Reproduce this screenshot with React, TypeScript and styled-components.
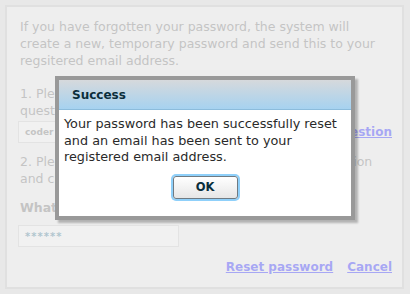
import React from 'react';
import styled, { createGlobalStyle } from 'styled-components';

const GlobalStyle = createGlobalStyle`
  html, body {
    margin: 0;
    padding: 0;
    background: #c5c5c5;
  }
  body {
    font-family: "DejaVu Sans", Verdana, sans-serif;
  }
`;

const Page = styled.div`
  position: relative;
  width: 410px;
  height: 294px;
  padding: 5px 6px 5px 5px;
  box-sizing: border-box;
  overflow: hidden;
`;

const Panel = styled.div`
  height: 100%;
  box-sizing: border-box;
  border: 2px solid #b2b2b2;
  background: #d4d4d4;
  padding: 11px 10px 0 13px;
  display: flex;
  flex-direction: column;
  color: #6b6b6b;
  font-size: 12.5px;
  line-height: 17px;
`;

const Para = styled.p<{ $bold?: boolean; $gap?: number }>`
  margin: 0 0 ${p => p.$gap ?? 16}px;
  font-weight: ${p => (p.$bold ? 'bold' : 'normal')};
  white-space: nowrap;
`;

const Row = styled.div<{ $top: number }>`
  display: flex;
  align-items: center;
  justify-content: space-between;
  margin: ${p => p.$top}px 0 10px -2px;
`;

const Field = styled.div<{ $width: number }>`
  width: ${p => p.$width}px;
  height: 22px;
  box-sizing: border-box;
  border: 1px solid #b8b8b8;
  background: #dcdcdc;
  padding: 0 6px;
  display: flex;
  align-items: center;
  font-size: 9px;
  font-weight: bold;
  color: #6b6b6b;
`;

const Dots = styled.span`
  color: #3b6f86;
  letter-spacing: 1px;
  font-size: 10px;
`;

const Link = styled.a`
  color: #2525e3;
  font-weight: bold;
  text-decoration: underline;
  cursor: pointer;
  font-size: 12px;
`;

const Actions = styled.div`
  margin-top: auto;
  margin-bottom: 11px;
  display: flex;
  justify-content: flex-end;
  gap: 14px;
`;

const Fade = styled.div`
  position: absolute;
  inset: 0;
  background: rgba(255, 255, 255, 0.6);
`;

const Dialog = styled.div`
  position: absolute;
  left: 55px;
  top: 76px;
  width: 300px;
  box-sizing: border-box;
  border: 4px solid #999999;
  background: #ffffff;
  box-shadow: 3px 3px 2px rgba(0, 0, 0, 0.25);
`;

const TitleBar = styled.div`
  height: 30px;
  box-sizing: border-box;
  border-bottom: 1px solid #8cbcdc;
  background: linear-gradient(#d6d9dc, #a6d2f0);
  padding: 0 13px;
  display: flex;
  align-items: center;
  font-size: 12px;
  font-weight: bold;
  color: #0b2e3c;
`;

const Body = styled.div`
  padding: 6px 5px 17px;
  font-size: 12.8px;
  line-height: 16.5px;
  color: #2a2a2a;
  display: flex;
  flex-direction: column;
  white-space: nowrap;
`;

const ButtonRow = styled.div`
  display: flex;
  justify-content: center;
  margin-top: 10px;
`;

const Button = styled.button`
  width: 65px;
  height: 23px;
  border: 1px solid #6f7a82;
  border-radius: 3px;
  background: linear-gradient(#ffffff, #e6e6e6);
  box-shadow: 0 0 0 2px #8fd0fa;
  font-family: "DejaVu Sans", Verdana, sans-serif;
  font-size: 11.5px;
  font-weight: bold;
  color: #0b2e3c;
  padding: 0;
`;

export default function App() {
  return (
    <Page>
      <GlobalStyle />
      <Panel>
        <Para>
          If you have forgotten your password, the system will
          <br />
          create a new, temporary password and send this to your
          <br />
          regsitered email address.
        </Para>
        <Para>
          1. Please confirm that this is the secret
          <br />
          question you chose when you registered.
        </Para>
        <Row $top={-14}>
          <Field $width={220}>coder</Field>
          <Link>Change question</Link>
        </Row>
        <Para $gap={12}>
          2. Please now type the answer to your security question
          <br />
          and click the link below.
        </Para>
        <Para $bold>What is your nickname?</Para>
        <Row $top={-7}>
          <Field $width={161}>
            <Dots>******</Dots>
          </Field>
        </Row>
        <Actions>
          <Link>Reset password</Link>
          <Link>Cancel</Link>
        </Actions>
      </Panel>
      <Fade />
      <Dialog>
        <TitleBar>Success</TitleBar>
        <Body>
          <span>
            Your password has been successfully reset
            <br />
            and an email has been sent to your
            <br />
            registered email address.
          </span>
          <ButtonRow>
            <Button>OK</Button>
          </ButtonRow>
        </Body>
      </Dialog>
    </Page>
  );
}
